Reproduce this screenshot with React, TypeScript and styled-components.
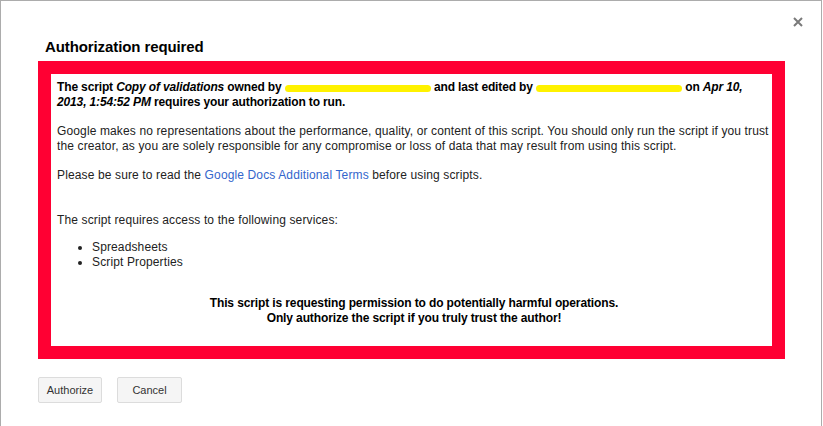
import React from "react";
import styled, { createGlobalStyle } from "styled-components";

const GlobalStyle = createGlobalStyle`
  html, body { margin: 0; padding: 0; background: #fff; }
  body { font-family: "Liberation Sans", Arial, sans-serif; }
`;

const Dialog = styled.div`
  box-sizing: border-box;
  width: 822px;
  height: 426px;
  border: 1px solid #acacac;
  border-bottom: none;
  background: #fff;
`;

const Header = styled.div`
  display: flex;
  justify-content: space-between;
  align-items: flex-start;
  padding: 16px 18px 0 44px;
`;

const Title = styled.h1`
  margin: 21px 0 0;
  font-size: 15px;
  line-height: 18px;
  font-weight: bold;
  letter-spacing: -0.1px;
  color: #000;
`;

const CloseButton = styled.button`
  display: flex;
  width: 10px;
  height: 10px;
  padding: 0;
  border: none;
  background: none;
  cursor: pointer;
`;

const Body = styled.div`
  padding: 5px 36px 0 37px;
`;

const WarningBox = styled.div`
  border: 13px solid #ff0033;
  background: #fff;
  padding: 6px 1px 20px 6px;
  color: #222;
  font-size: 12px;
  line-height: 15px;
  letter-spacing: 0.13px;
`;

const Para = styled.p<{ $gap: number; $bold?: boolean }>`
  margin: 0 0 ${(p) => p.$gap}px;
  ${(p) => (p.$bold ? "font-weight: bold; color: #000; letter-spacing: -0.14px;" : "")}
`;

const Redaction = styled.span<{ $w: number }>`
  display: inline-block;
  width: ${(p) => p.$w}px;
  height: 7px;
  border-radius: 4px;
  background: #fff200;
  vertical-align: -1px;
`;

const Link = styled.a`
  color: #3366cc;
  text-decoration: none;
`;

const ServiceList = styled.ul`
  margin: 0 0 26px;
  padding-left: 35px;
  list-style: disc;
`;

const Warning = styled.p`
  margin: 0;
  text-align: center;
  font-weight: bold;
  color: #000;
  letter-spacing: -0.12px;
`;

const Footer = styled.div`
  display: flex;
  gap: 15px;
  padding: 18px 0 0 37px;
`;

const Button = styled.button<{ $w: number }>`
  box-sizing: border-box;
  width: ${(p) => p.$w}px;
  height: 26px;
  padding: 0;
  border: 1px solid #dcdcdc;
  border-radius: 2px;
  background: #f5f5f5;
  color: #333;
  font-family: "Liberation Sans", Arial, sans-serif;
  font-size: 11px;
  cursor: pointer;
`;

export default function App() {
  return (
    <>
      <GlobalStyle />
      <Dialog>
        <Header>
          <Title>Authorization required</Title>
          <CloseButton aria-label="Close">
            <svg width="10" height="10" viewBox="0 0 10 10">
              <path d="M1 1 L9 9 M9 1 L1 9" stroke="#7a7a7a" strokeWidth="2" />
            </svg>
          </CloseButton>
        </Header>
        <Body>
          <WarningBox>
            <Para $gap={14} $bold>
              The script <i>Copy of validations</i> owned by <Redaction $w={146} /> and last edited by{" "}
              <Redaction $w={146} /> on <i>Apr 10, 2013, 1:54:52 PM</i> requires your authorization to run.
            </Para>
            <Para $gap={14}>
              Google makes no representations about the performance, quality, or content of this script. You should only run the script if you trust the creator, as you are solely responsible for any compromise or loss of data that may result from using this script.
            </Para>
            <Para $gap={30}>
              Please be sure to read the <Link href="#">Google Docs Additional Terms</Link> before using scripts.
            </Para>
            <Para $gap={12}>The script requires access to the following services:</Para>
            <ServiceList>
              <li>Spreadsheets</li>
              <li>Script Properties</li>
            </ServiceList>
            <Warning>
              This script is requesting permission to do potentially harmful operations.
              <br />
              Only authorize the script if you truly trust the author!
            </Warning>
          </WarningBox>
        </Body>
        <Footer>
          <Button $w={64}>Authorize</Button>
          <Button $w={65}>Cancel</Button>
        </Footer>
      </Dialog>
    </>
  );
}
